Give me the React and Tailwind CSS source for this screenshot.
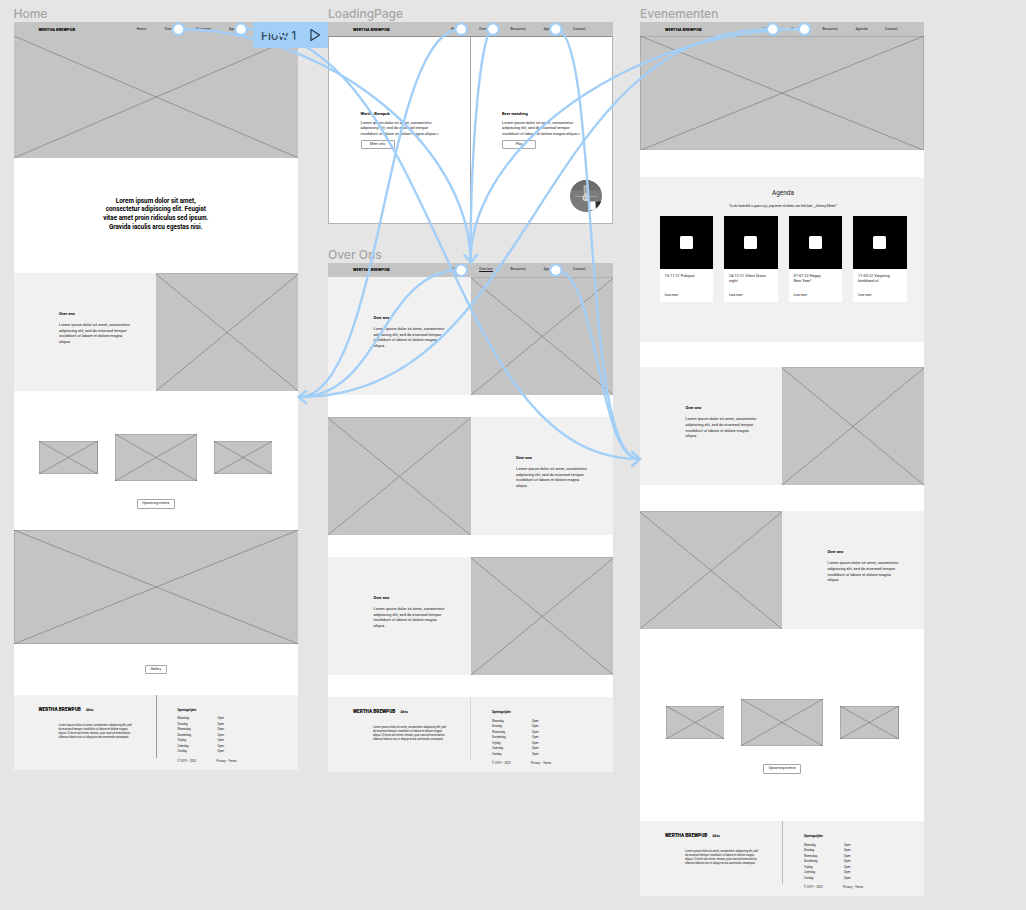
import React from "react";

const body = ["Lorem ipsum dolor sit amet, consectetur", "adipiscing elit, sed do eiusmod tempor", "incididunt ut labore et dolore magna", "aliqua."];

function Cross({ className = "", border = true }) {
  return (
    <svg className={`block shrink-0 bg-[#c4c4c4] ${className}`} viewBox="0 0 100 100" preserveAspectRatio="none">
      <g stroke="#4a4a4a" strokeOpacity="0.5" strokeWidth="0.8" fill="none">
        <path d="M0 0L100 100M0 100L100 0" vectorEffect="non-scaling-stroke" />
        {border && <path d="M0 0H100V100H0Z" vectorEffect="non-scaling-stroke" />}
      </g>
    </svg>
  );
}

function Frame({ label, className, children }) {
  return (
    <section className={`absolute ${className}`}>
      <h2 className="h-[17px] font-['Inter'] text-[12px] leading-[17px] font-medium whitespace-nowrap text-[#a6a6a6]">{label}</h2>
      <div className="bg-white">{children}</div>
    </section>
  );
}

function Nav({ underline = false, contact = true, className = "h-[14px]" }) {
  return (
    <nav className={`flex items-center bg-[#c4c4c4] pl-[25px] text-[3.55px] leading-[5px] text-[#1a1a1a] ${className}`}>
      <span className="w-[98px] text-[4.05px] font-black text-black">WERTHA BREWPUB</span>
      <span className="w-[28px]">Home</span>
      <span className={underline ? "w-[31.5px] underline" : "w-[31.5px]"}>Over ons</span>
      <span className="w-[33px]">Brouwerij</span>
      <span className="w-[29.5px]">Agenda</span>
      {contact && <span>Contact</span>}
    </nav>
  );
}

function Copy() {
  return (
    <div className="w-1/2 bg-[#f1f1f1] pt-[38px] pl-[45.5px] text-[#1a1a1a]">
      <h3 className="text-[3.95px] leading-[5px] font-bold text-black">Over ons</h3>
      <div className="mt-[6px] text-[3.96px] leading-[5.6px]">
        {body.map((l) => <p key={l}>{l}</p>)}
      </div>
    </div>
  );
}

function Row({ flip = false }) {
  return (
    <div className="flex h-[118px]">
      {flip && <Cross border={false} className="h-full w-1/2 border-t border-[#b0b0b0]" />}
      <Copy />
      {!flip && <Cross border={false} className="h-full w-1/2 border-t border-[#b0b0b0]" />}
    </div>
  );
}

function Button({ children, className }) {
  return (
    <button className={`flex shrink-0 items-center justify-center rounded-[1px] border border-[#a6a6a6] bg-white text-[3.5px] leading-[5px] text-[#1a1a1a] ${className}`}>
      {children}
    </button>
  );
}

function Gallery() {
  return (
    <div className="flex items-center justify-center gap-[17px]">
      <Cross className="h-[33px] w-[58.5px]" />
      <Cross className="h-[47px] w-[82px]" />
      <Cross className="h-[33px] w-[58.5px]" />
    </div>
  );
}

const days = ["Maandag", "Dinsdag", "Woensdag", "Donderdag", "Vrijdag", "Zaterdag", "Zondag"];

function Footer({ line = "bg-[#9c9c9c]" }) {
  return (
    <footer className="flex h-[75px] bg-[#f1f1f1] text-[2.78px] leading-[4px] text-[#1a1a1a]">
      <div className="w-[142px] pt-[11.5px] pl-[25px]">
        <div className="flex items-center text-black">
          <span className="w-[47.5px] text-[4.7px] leading-[6px] font-black">WERTHA BREWPUB</span>
          <span className="font-bold">Adres</span>
        </div>
        <div className="mt-[10.5px] pl-[20px]">
          <p>Lorem ipsum dolor sit amet, consectetur adipiscing elit, sed</p>
          <p>do eiusmod tempor incididunt ut labore et dolore magna</p>
          <p>aliqua. Ut enim ad minim veniam, quis nostrud exercitation</p>
          <p>ullamco laboris nisi ut aliquip ex ea commodo consequat.</p>
        </div>
      </div>
      <div className={`h-[63px] w-px ${line}`} />
      <div className="pt-[12.7px] pl-[21px]">
        <h4 className="font-bold text-black">Openingstijden</h4>
        <ul className="mt-[4px]">
          {days.map((d) => (
            <li key={d} className="flex h-[5.5px] items-center">
              <span className="w-[40px]">{d}</span><span>Open</span>
            </li>
          ))}
        </ul>
        <div className="mt-[5px] flex">
          <span className="w-[39px]">© 2019 – 2020</span><span>Privacy – Terms</span>
        </div>
      </div>
    </footer>
  );
}

function Choice({ title, action, className }) {
  return (
    <div className={`w-1/2 pt-[73.5px] pl-[31.5px] text-[#1a1a1a] ${className}`}>
      <h3 className="text-[3.95px] leading-[5px] font-bold text-black">{title}</h3>
      <div className="mt-[4px] text-[3.96px] leading-[5.5px]">
        <p>Lorem ipsum dolor sit amet, consectetur</p>
        <p>adipiscing elit, sed do eiusmod tempor</p>
        <p>incididunt ut labore et dolore magna aliqua.v</p>
      </div>
      <Button className="mt-[4px] h-[9px] w-[34px]">{action}</Button>
    </div>
  );
}

const events = [
  ["15-11-21 Pubquiz", ""],
  ["24-12-21 Silent Disco", "night"],
  ["01-01-22 Happy", "New Year!"],
  ["11-03-22 Verjaring", "bierblond.nl"],
];

function Agenda() {
  return (
    <div className="flex h-[165px] flex-col items-center bg-[#f1f1f1] pt-[12px] pl-[2px] text-[#1a1a1a]">
      <h3 className="text-[6.4px] leading-[9px]">Agenda</h3>
      <p className="mt-[6px] text-[3.42px] leading-[5px]">To do hoeveld u gaan zijn, papieren drinken van het bier: „Johnny Mieer”</p>
      <div className="mt-[7px] flex gap-[11px]">
        {events.map(([a, b]) => (
          <article key={a} className="h-[86.5px] w-[53.5px] bg-white">
            <div className="flex h-[53.5px] items-center justify-center bg-black">
              <span className="size-[13px] rounded-[1.5px] bg-white" />
            </div>
            <div className="h-[19px] pt-[4.5px] pl-[5px] text-[3.9px] leading-[4.7px]">
              <p>{a}</p><p>{b}</p>
            </div>
            <p className="mt-[4.5px] pl-[5px] text-[2.95px] leading-[4px]">Lees meer</p>
          </article>
        ))}
      </div>
    </div>
  );
}

const links = [
  "M178 29C325 29 470 144 470.5 262",
  "M241 29C440 29 440 459 639 459",
  "M461 29C383 29 383 397 299 397",
  "M493 29C481 29 470.5 144 470.5 262",
  "M556 29C600 29 580 459 639 459",
  "M461 270C381 270 381 397 299 397",
  "M556 270C598 270 598 459 639 459",
  "M772 29C535 29 535 397 299 397",
  "M804 29C637 29 470.5 144 470.5 262",
];
const nodes = [[178.5, 29.3], [241, 29.3], [461.2, 29.3], [493, 29.3], [555.8, 29.3], [461.2, 270.3], [555.8, 270.3], [772.7, 29.3], [804.5, 29.3]];

export default function App() {
  return (
    <main className="relative h-[910px] w-[1026px] overflow-hidden bg-[#e5e5e5] font-['Roboto',sans-serif] whitespace-nowrap">
      <Frame label="Home" className="top-[5px] left-[13.5px] w-[284.5px]">
        <Nav contact={false} />
        <Cross border={false} className="h-[122px] w-full" />
        <div className="h-[115px] pt-[38.5px] text-center text-[6.35px] leading-[8.9px] font-bold text-black">
          <p>Lorem ipsum dolor sit amet,</p>
          <p>consectetur adipiscing elit. Feugiat</p>
          <p>vitae amet proin ridiculus sed ipsum.</p>
          <p>Gravida iaculis arcu egestas nisi.</p>
        </div>
        <Row />
        <div className="flex h-[139px] flex-col items-center pt-[43px]">
          <Gallery />
          <Button className="mt-[18px] h-[9.5px] w-[38px]">Upcoming events</Button>
        </div>
        <Cross className="h-[114px] w-full" />
        <div className="flex h-[51px] justify-center pt-[21px]">
          <Button className="h-[9px] w-[22px]">Gallery</Button>
        </div>
        <Footer />
      </Frame>

      <Frame label="LoadingPage" className="top-[5px] left-[328px] w-[285px]">
        <Nav />
        <div className="flex h-[188px] border border-[#b4b4b4] border-t-[#8f8f8f]">
          <Choice title="Wertha Brewpub" action="Meer info" className="border-r border-[#a6a6a6]" />
          <Choice title="Beer matching" action="Play" className="" />
        </div>
        <svg className="absolute top-[175.3px] left-[242.2px] size-[32px]" viewBox="0 0 32 32">
          <defs><clipPath id="avatar"><circle cx="16" cy="16" r="16" /></clipPath></defs>
          <g clipPath="url(#avatar)">
            <rect width="32" height="32" fill="#7a7a7a" />
            <path d="M0 0H32V10H0Z" fill="#6c6c6c" />
            <path d="M13.5 5.5H18.5V14L18 21H14.5Z" fill="#c4c4c4" />
            <path d="M14.5 7H17V13H14.5Z" fill="#a0a0a0" />
            <path d="M5 16.5H27" stroke="#a8a8a8" strokeWidth="0.8" />
            <circle cx="15.5" cy="18" r="2.4" fill="none" stroke="#dcdcdc" strokeWidth="1.2" />
            <path d="M20.5 21.5H25.5V30H18Z" fill="#fff" />
            <path d="M25.5 22L32 21V32H27Z" fill="#2b2b2b" />
          </g>
        </svg>
      </Frame>

      <Frame label="Over Ons" className="top-[245.5px] left-[328px] w-[285px]">
        <Nav underline className="h-[14.7px]" />
        <Row />
        <div className="h-[22px]" />
        <Row flip />
        <div className="h-[22px]" />
        <Row />
        <div className="h-[22px]" />
        <Footer line="bg-[#d8d8d8]" />
      </Frame>

      <Frame label="Evenementen" className="top-[5px] left-[640px] w-[284px]">
        <Nav />
        <Cross className="h-[114.4px] w-full" />
        <div className="h-[26.6px]" />
        <Agenda />
        <div className="h-[25.5px]" />
        <Row />
        <div className="h-[26px]" />
        <Row flip />
        <div className="flex h-[191.8px] flex-col items-center pt-[69.7px]">
          <Gallery />
          <Button className="mt-[18px] h-[9.5px] w-[38px]">Upcoming events</Button>
        </div>
        <Footer line="bg-[#bdbdbd]" />
      </Frame>

      <div className="absolute top-[22px] left-[252.5px] flex h-[26px] w-[75.5px] items-center justify-between bg-[#a1cff8] pr-[7px] pl-[8.5px]">
        <span className="pt-px font-['Inter'] text-[12px] leading-4 font-medium text-[#34495c]">Flow 1</span>
        <svg className="h-[14px] w-[12px]" viewBox="0 0 12 14"><path d="M2 1.5L10.5 7L2 12.5Z" fill="none" stroke="#24384a" strokeWidth="1.2" strokeLinejoin="round" /></svg>
      </div>

      <svg className="absolute inset-0 h-[910px] w-[1026px]" viewBox="0 0 1026 910">
        <g fill="none" stroke="#a1cff8" strokeWidth="2.4" strokeLinecap="round" strokeLinejoin="round">
          {links.map((d) => <path key={d} d={d} />)}
          <path d="M306 391L298.5 397L306 403M464.5 255L470.7 262.5L477 255M632 452L640 459L632 466" />
        </g>
        {nodes.map(([x, y]) => (
          <g key={`${x}-${y}`}>
            <circle cx={x} cy={y} r="6.8" fill="#a1cff8" />
            <circle cx={x} cy={y} r="4.7" fill="#fff" />
          </g>
        ))}
      </svg>
    </main>
  );
}
